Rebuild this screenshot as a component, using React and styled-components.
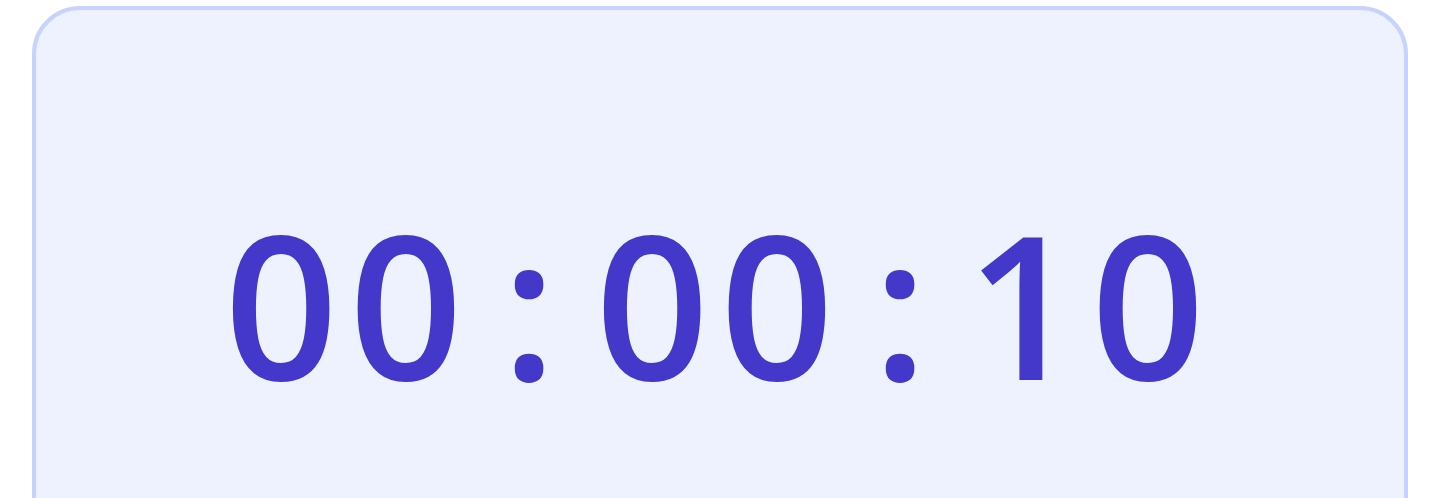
import React from "react";
import styled, { createGlobalStyle } from "styled-components";

const GlobalStyle = createGlobalStyle`
  html, body {
    margin: 0;
    padding: 0;
    background: #ffffff;
  }
  body {
    font-family: "Open Sans", "Noto Sans", sans-serif;
  }
`;

const Page = styled.div`
  padding: 6px 31px 0 32px;
`;

const Card = styled.div`
  background: #eef2ff;
  border: 4px solid #c7d2fe;
  border-radius: 48px;
  padding: 193px 0 190px;
  display: flex;
  justify-content: center;
`;

const Clock = styled.div`
  display: flex;
  align-items: baseline;
  color: #4338ca;
  font-size: 199px;
  font-weight: 600;
  line-height: 1;
  letter-spacing: 0.055em;
`;

const Digits = styled.span``;

const Separator = styled.span`
  margin: 0 ${(p) => p.$space}px;
`;

export default function App() {
  const parts = ["00", "00", "10"];
  return (
    <>
      <GlobalStyle />
      <Page>
        <Card>
          <Clock>
            {parts.map((part, i) => (
              <React.Fragment key={i}>
                {i > 0 && <Separator $space={28}>:</Separator>}
                <Digits>{part}</Digits>
              </React.Fragment>
            ))}
          </Clock>
        </Card>
      </Page>
    </>
  );
}
